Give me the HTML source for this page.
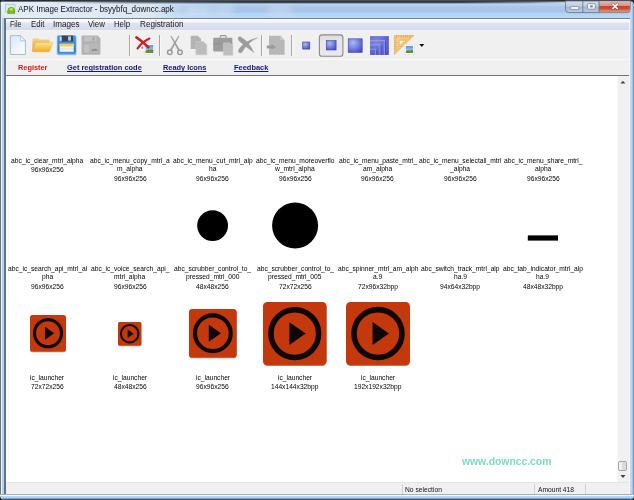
<!DOCTYPE html>
<html><head><meta charset="utf-8"><title>APK Image Extractor</title>
<style>
html,body{margin:0;padding:0;}
body{width:634px;height:500px;overflow:hidden;background:#fff;position:relative;font-family:"Liberation Sans", sans-serif;}
div,span,svg{position:absolute;box-sizing:border-box;}
.tl{left:0;top:0;width:634px;height:500px;will-change:transform;filter:blur(.35px);}
#gtxt{}
.tl span{white-space:pre;line-height:1;transform-origin:0 50%;display:block;}
#frame{left:0;top:0;width:634px;height:500px;background:#b3d2f0;border-radius:5px 6px 5px 5px;overflow:hidden;}
#bg{left:0;top:0;width:634px;height:500px;background:#23272c;}
#tb{left:0;top:0;width:634px;height:18px;background:linear-gradient(to bottom,#1f2124 0,#2f3338 .9px,#6b737c 1.5px,#bccbdb 2.2px,#c8dcf0 3px,#b4d0ed 5px,#a7c7ea 7px,#a5c5ea 11.5px,#b4d3f4 13.5px,#bcd9f7 18px);}
#tbd{left:50px;top:0;width:520px;height:5px;background:linear-gradient(to bottom,#66727f 0,#2c3239 1px,#2e353e 2px,#46525f 2.7px,rgba(120,145,172,.8) 3.4px,rgba(150,180,214,0) 4.4px);-webkit-mask-image:linear-gradient(to right,transparent 0,rgba(0,0,0,.6) 80px,#000 200px,#000 410px,rgba(0,0,0,.5) 480px,transparent 518px);mask-image:linear-gradient(to right,transparent 0,rgba(0,0,0,.6) 80px,#000 200px,#000 410px,rgba(0,0,0,.5) 480px,transparent 518px);}
#tbglow{left:1px;top:2.4px;width:200px;height:15.6px;background:linear-gradient(to right,rgba(232,238,245,.92) 0,rgba(226,234,243,.88) 150px,rgba(215,228,242,.5) 176px,rgba(200,220,242,0) 196px);}
.blot{top:5px;height:11px;border-radius:5px;background:rgba(220,232,246,.55);filter:blur(3px);}
#fl{left:0;top:2.5px;width:6px;height:497.5px;background:linear-gradient(to right,#6a7582 0,#6a7582 1px,#eef4fa 1px,#eef4fa 1.9px,#a9d0f5 2.1px,#b6d7f6 4px,#dfeaf5 4.4px,rgba(0,0,0,0) 4.4px);}
#fli{left:4.4px;top:18px;width:1.2px;height:477px;background:#66727e;}
#fr{left:629px;top:2.5px;width:5px;height:497.5px;background:linear-gradient(to right,rgba(0,0,0,0) 0,rgba(0,0,0,0) 1px,#c2ddf8 1px,#b0d4f6 3.3px,#8ab6e4 3.7px,#749fce 4.4px,#5b7ea4 5px);}
#fri{left:629px;top:18px;width:1px;height:477px;background:#f4f8fc;}
#fb{left:0;top:494px;width:634px;height:6px;background:linear-gradient(to bottom,#a9b0b8 0,#a9b0b8 .9px,#f2f7fc 1.1px,#f2f7fc 1.9px,#b8d8f8 2.1px,#aad0f5 3.9px,#7fa9d6 4.2px,#6f97c2 4.9px,#46566a 5.1px,#46566a 6px);}
#client{left:6px;top:18px;width:623px;height:477px;background:#f0f0f0;}
#ctop{left:5px;top:17.6px;width:625px;height:1.2px;background:#76828f;}
#menu{left:6px;top:19px;width:623px;height:12px;background:linear-gradient(to bottom,#fdfdfe 0,#f4f5fa 3px,#dfe3f0 4.5px,#d6dbeb 10.5px,#eef0f6 11px,#f6f6fa 12px);}
#tool{left:6px;top:31px;width:623px;height:29px;background:#f0f0f0;}
#tsep{left:6px;top:59px;width:623px;height:1px;background:#f8f8f8;}
#links{left:6px;top:60px;width:623px;height:15px;background:#f0f0f0;}
#cborder{left:5px;top:74.8px;width:624px;height:1.3px;background:#737373;}
#content{left:6px;top:76px;width:611px;height:405.5px;background:#fff;}
#sb{left:617px;top:76px;width:12px;height:405.5px;background:#f0f0f0;border-left:1px solid #f7f7f7;}
#thumb{left:618.2px;top:461.2px;width:9px;height:9.4px;border:1px solid #a4a4a4;border-radius:2px;background:linear-gradient(to right,#f7f7f7,#e9e9e9 45%,#d6d6d6 55%,#e0e0e0);}
#status{left:6px;top:481.5px;width:623px;height:13px;background:#f0f0f0;border-top:1px solid #e4e4e4;}
.sdiv{top:484px;width:1px;height:10px;background:#d2d2d2;}
.vsep{top:35px;width:1.4px;height:21px;background:#a6a6a6;box-shadow:1px 0 0 #f8f8f8;}
#flt{left:1px;top:2.4px;width:4.6px;height:15.4px;background:linear-gradient(to bottom,#e9eff6,#dfe8f2);}

</style></head><body>
<div id="bg"></div>
<div id="frame">
<div id="tb"></div><div id="tbglow"></div><div class="blot" style="left:186px;width:26px"></div><div class="blot" style="left:212px;width:22px;opacity:.8"></div><div class="blot" style="left:268px;width:24px;opacity:.7"></div><div id="tbd"></div>
<div id="fl"></div><div id="fr"></div>
<div id="flt"></div>
<div id="client"></div>
<div id="fli"></div><div id="fri"></div>
<div id="ctop"></div>
<div id="menu"></div>
<div id="tool"></div><div id="tsep"></div>
<div id="links"></div>
<div id="content"></div>
<div id="cborder"></div>
<div id="sb"></div><div id="thumb"></div>
<svg style="left:619px;top:79px" width="8" height="6" viewBox="0 0 8 6"><path d="M1.4 4.4 L3.9 1.7 L6.4 4.4 Z" fill="#444"/></svg>
<svg style="left:619px;top:474px" width="8" height="6" viewBox="0 0 8 6"><path d="M1.5 1 L6.5 1 L4 3.9 Z" fill="#444"/></svg>
<svg style="left:622px;top:488px" width="8" height="8" viewBox="0 0 8 8"><path d="M5.2 1h1v1h-1z M3.4 2.8h1v1h-1z M5.2 2.8h1v1h-1z M1.6 4.6h1v1h-1z M3.4 4.6h1v1h-1z M5.2 4.6h1v1h-1z" fill="#c4c8cc"/></svg>
<div id="status"></div>
<div class="sdiv" style="left:402px"></div><div class="sdiv" style="left:534px"></div><div class="sdiv" style="left:585px"></div>
<div id="fb"></div>
<svg style="left:0;top:0" width="634" height="20" viewBox="0 0 634 20">
<defs>
<linearGradient id="gcb" x1="0" y1="0" x2="0" y2="1"><stop offset="0" stop-color="#d4e0ee"/><stop offset=".45" stop-color="#bccde0"/><stop offset=".5" stop-color="#a3b8d0"/><stop offset="1" stop-color="#b6cbe2"/></linearGradient>
<linearGradient id="gcl" x1="0" y1="0" x2="0" y2="1"><stop offset="0" stop-color="#e4b4a8"/><stop offset=".38" stop-color="#dc9484"/><stop offset=".47" stop-color="#c8422e"/><stop offset=".68" stop-color="#cc4c38"/><stop offset=".82" stop-color="#d67a64"/><stop offset="1" stop-color="#dc927a"/></linearGradient>
</defs>
<path d="M565.6 1 H630.2 V9.6 Q630.2 12.6 627.2 12.6 H568.6 Q565.6 12.6 565.6 9.6 Z" fill="url(#gcb)" stroke="#6b7a8c" stroke-width=".9"/>
<path d="M599 1.4 H629.8 V9.4 Q629.8 12.2 627 12.2 H599 Z" fill="url(#gcl)"/>
<path d="M582.8 1 V12.6 M599 1 V12.6" stroke="#6b7a8c" stroke-width=".9"/>
<rect x="570.6" y="6.6" width="8.2" height="2.8" rx="1" fill="#fbfcfe" stroke="#6d7886" stroke-width=".7"/>
<rect x="587.6" y="3.6" width="7.6" height="5.6" rx="1" fill="#f4f7fb" stroke="#6d7886" stroke-width=".7"/>
<rect x="590" y="5.4" width="2.8" height="2" fill="#7c8796"/>
<path d="M613 4.3 L617.2 8.3 M617.2 4.3 L613 8.3" stroke="#5b2a24" stroke-width="2.6" stroke-linecap="square" opacity=".5"/>
<path d="M613 4.3 L617.2 8.3 M617.2 4.3 L613 8.3" stroke="#fff" stroke-width="1.6" stroke-linecap="square"/>
<!-- app icon -->
<rect x="5.3" y="4.3" width="9.6" height="7.6" fill="#dfeaf6" stroke="#a9bfdd" stroke-width=".8"/>
<rect x="10" y="5" width="4.4" height="3" fill="#d8f0c4"/>
<path d="M7.3 13 V11 Q7.6 7 11.2 7 Q14.8 7 15.1 11 V13 Q15.1 13.9 14.2 13.9 H12.7 V12.6 H9.7 V13.9 H8.2 Q7.3 13.9 7.3 13 Z" fill="#74b616"/><path d="M9.7 12.6 H12.7 V13.9 H9.7 Z" fill="#3f6a10" opacity=".55"/>
<path d="M9.2 10.4 Q9.2 7.8 11.2 7.8 Q13.2 7.8 13.2 10.4 Z" fill="#b4ea44"/>
</svg>

<div class="vsep" style="left:129px"></div>
<div class="vsep" style="left:159px"></div>
<div class="vsep" style="left:261px"></div>
<div class="vsep" style="left:290.5px"></div>
<svg style="left:6px;top:31px" width="440" height="29" viewBox="6 31 440 29">
<defs>
<linearGradient id="gdoc" x1="0" y1="0" x2="1" y2="1"><stop offset="0" stop-color="#dbe6fb"/><stop offset=".5" stop-color="#edf3fd"/><stop offset="1" stop-color="#ffffff"/></linearGradient>
<linearGradient id="gfold" x1="0" y1="0" x2="0" y2="1"><stop offset="0" stop-color="#fce49a"/><stop offset=".5" stop-color="#f9c95a"/><stop offset="1" stop-color="#f3a92a"/></linearGradient>
<linearGradient id="gfoldb" x1="0" y1="0" x2="0" y2="1"><stop offset="0" stop-color="#f5d68a"/><stop offset="1" stop-color="#dfa040"/></linearGradient>
<linearGradient id="gsave" x1="0" y1="0" x2="0" y2="1"><stop offset="0" stop-color="#4f97e6"/><stop offset=".8" stop-color="#3378d0"/><stop offset="1" stop-color="#5aa8ee"/></linearGradient>
<radialGradient id="gsq" cx=".35" cy=".3" r=".8"><stop offset="0" stop-color="#a9bbf7"/><stop offset=".55" stop-color="#727ee0"/><stop offset="1" stop-color="#4a4cbc"/></radialGradient>
<linearGradient id="gbtn" x1="0" y1="0" x2="0" y2="1"><stop offset="0" stop-color="#dcdcdc"/><stop offset=".3" stop-color="#e6e6e6"/><stop offset="1" stop-color="#e9e9e9"/></linearGradient>
<linearGradient id="gsky" x1="0" y1="0" x2="0" y2="1"><stop offset="0" stop-color="#5c90d6"/><stop offset="1" stop-color="#cfe3f8"/></linearGradient>
<linearGradient id="grul" x1="0" y1="0" x2="1" y2="1"><stop offset="0" stop-color="#f8d592"/><stop offset="1" stop-color="#efb055"/></linearGradient>
</defs>
<!-- new doc -->
<path d="M10.4 35.7 H20.3 L25.4 40.8 V54.5 H10.4 Z" fill="url(#gdoc)" stroke="#9dbedb" stroke-width="1"/>
<path d="M20.3 35.7 V40.8 H25.4 Z" fill="#f4f9ff" stroke="#9dbedb" stroke-width=".8"/>
<!-- folder -->
<path d="M32.4 51 V39 Q32.4 38.2 33.2 38.2 H38.6 L39.8 39.6 H48.8 Q49.6 39.6 49.6 40.4 V51 Z" fill="url(#gfoldb)"/>
<path d="M35.6 42.4 H52.2 Q52.9 42.4 52.6 43.2 L49.9 51 Q49.6 51.8 48.8 51.8 H32.9 Q32.1 51.8 32.4 51 Z" fill="url(#gfold)" stroke="#eda32a" stroke-width=".4"/>
<!-- save -->
<rect x="57.2" y="35.6" width="18.9" height="19.2" rx="1.2" fill="url(#gsave)" stroke="#7fb8f0" stroke-width=".6"/>
<rect x="61.6" y="35.6" width="11.4" height="5.9" fill="#3b4352"/>
<rect x="68" y="36.4" width="3" height="4.2" fill="#b4c2d8"/>
<rect x="59.8" y="36.8" width="1.8" height="4" fill="#cfe3fa"/>
<rect x="59.6" y="43.8" width="14.1" height="8" fill="#f1f1f1"/>
<rect x="59.6" y="43.8" width="14.1" height="2.6" fill="#efd24a"/>
<rect x="59.6" y="48.6" width="14.1" height=".6" fill="#d8d8d8"/>
<!-- gray save -->
<path d="M81.5 36.4 Q81.5 35.6 82.3 35.6 H97.6 L100.4 38.4 V54 Q100.4 54.8 99.6 54.8 H82.3 Q81.5 54.8 81.5 54 Z" fill="#b2b2b2"/>
<rect x="84.2" y="36.6" width="12.2" height="4.6" fill="#c3c3c3"/>
<rect x="92.2" y="37" width="2.4" height="3.6" fill="#aaaaaa"/>
<rect x="84.2" y="44.6" width="5.2" height="8" fill="#c2c2c2"/>
<rect x="90.6" y="44.2" width="8" height="8.6" fill="#b9b9b9"/>
<path d="M91.2 51 Q92.6 47.6 94.4 49.2 Q96.2 47.2 98 50.8 Z" fill="#8e8e8e"/>
<!-- red X + picture -->
<rect x="144.3" y="43.8" width="10.2" height="10.4" fill="#fcfdff" stroke="#d4dce8" stroke-width=".5"/>
<rect x="145.5" y="45" width="7.8" height="8" fill="url(#gsky)"/>
<path d="M145.5 51 Q147.5 48.6 149.5 50 Q151.6 48.4 153.3 50.2 V53 H145.5 Z" fill="#5f9232"/>
<circle cx="142.3" cy="47.7" r="1" fill="#5aa040"/>
<rect x="141.6" y="49.2" width="2.6" height="1" fill="#fafcff"/>
<path d="M136.4 37.4 Q142.4 41.2 148.4 47.4" stroke="#c9202c" stroke-width="2.6" stroke-linecap="round" fill="none"/>
<path d="M149.4 38.6 Q142.4 42 137.6 48.4" stroke="#c9202c" stroke-width="2.2" stroke-linecap="round" fill="none"/>
<!-- scissors -->
<g stroke="#9b9b9b" fill="none" stroke-linecap="round">
<path d="M170.3 35.9 L171.6 35.9 L179.9 49.8 L178.2 50.8 Z" fill="#a0a0a0" stroke="none"/>
<path d="M179.5 35.9 L178.2 35.9 L169.9 49.8 L171.6 50.8 Z" fill="#a0a0a0" stroke="none"/>
<circle cx="169.8" cy="52.2" r="2.3" stroke-width="1.5"/>
<circle cx="180" cy="52.2" r="2.3" stroke-width="1.5"/>
</g>
<!-- copy -->
<path d="M190.7 35.8 H197.8 L201.1 39.1 V49 H190.7 Z" fill="#b3b3b3"/>
<path d="M195.9 41.5 H203.4 L206.8 44.9 V54.7 H195.9 Z" fill="#bcbcbc" stroke="#c9c9c9" stroke-width=".6"/>
<!-- paste -->
<path d="M220.2 37.8 V36.6 Q220.2 35.7 221.1 35.7 H225.3 Q226.2 35.7 226.2 36.6 V37.8" fill="none" stroke="#9a9a9a" stroke-width="1.2"/>
<rect x="213.2" y="37.7" width="19.2" height="13.7" rx="1" fill="#9c9c9c"/>
<rect x="213.2" y="43.4" width="19.2" height=".7" fill="#8e8e8e"/>
<path d="M223.4 42.9 H230 L232.8 45.7 V55.2 H223.4 Z" fill="#bdbdbd" stroke="#cacaca" stroke-width=".6"/>
<!-- gray X -->
<path d="M238.2 38.6 Q237.8 36.4 240.2 36.8 Q249 41.6 253.8 52.4 Q245.6 46.4 239.2 41 Q238.4 40 238.2 38.6 Z" fill="#9c9c9c" stroke="#9c9c9c" stroke-width=".5" stroke-linejoin="round"/>
<path d="M257.4 37.8 Q247.6 42.2 242.2 51.8 Q240.8 53.6 239.2 52.6 Q237.8 51.4 238.8 49.4 Q244.6 40.6 257.4 37.8 Z" fill="#9c9c9c" stroke="#9c9c9c" stroke-width=".5" stroke-linejoin="round"/>
<!-- doc with arrow -->
<path d="M269 35.8 H280.2 L284.6 40.2 V54.7 H269 Z" fill="#b7b7b7"/>
<path d="M280.2 35.8 V40.2 H284.6 Z" fill="#c6c6c6"/>
<path d="M266.8 45.4 H271.6 V44.2 L276 46.9 L271.6 49.6 V48.4 H266.8 Z" fill="#9a9a9a"/>
<!-- small sq -->
<rect x="302.7" y="42" width="7.1" height="7.1" fill="url(#gsq)" stroke="#4444ae" stroke-width=".6"/>
<!-- selected button -->
<rect x="319.4" y="34.9" width="23.5" height="21.4" rx="2.6" fill="url(#gbtn)" stroke="#8b8b8b" stroke-width="1.1"/>
<rect x="326.3" y="40.6" width="9.8" height="9.4" fill="url(#gsq)" stroke="#4444ae" stroke-width=".6"/>
<!-- large sq -->
<rect x="348.2" y="38.8" width="14" height="13.6" fill="url(#gsq)" stroke="#4545b0" stroke-width=".6"/>
<!-- nested -->
<rect x="370.1" y="36.2" width="18.7" height="18.7" fill="#5b60c9"/>
<rect x="370.1" y="36.2" width="18.7" height="18.7" fill="url(#gsq)" opacity=".45"/>
<g fill="none">
<path d="M370.1 40.6 H384.4 V54.9" stroke="#8f9bea" stroke-width="1.1"/>
<path d="M370.1 44.9 H380.1 V54.9" stroke="#8f9bea" stroke-width="1.1"/>
<path d="M370.1 49.3 H375.8 V54.9" stroke="#8f9bea" stroke-width="1.1"/>
<path d="M385.4 41 V54.9 M381.1 45.4 V54.9 M376.8 49.8 V54.9" stroke="#4042ae" stroke-width=".8"/>
</g>
<!-- ruler -->
<path d="M394.4 35.5 H413.9 L394.4 54.6 Z" fill="url(#grul)" stroke="#e0a040" stroke-width=".5"/>
<path d="M399.2 40.2 H405.4 L399.2 46.4 Z" fill="#f3ede2" stroke="#d69a3c" stroke-width=".5"/>
<path d="M396.6 35.7 v2 M398.8 35.7 v1.4 M401 35.7 v2 M403.2 35.7 v1.4 M405.4 35.7 v2 M407.6 35.7 v1.4 M409.8 35.7 v1.6 M394.6 38 h2 M394.6 40.2 h1.4 M394.6 42.4 h2 M394.6 44.6 h1.4 M394.6 46.8 h2 M394.6 49 h1.4" stroke="#c98c36" stroke-width=".6"/>
<!-- picture -->
<rect x="404.3" y="44.4" width="10.3" height="10.2" fill="#fdfeff" stroke="#d0d8e4" stroke-width=".5"/>
<rect x="405.8" y="45.9" width="7.3" height="7.2" fill="url(#gsky)"/>
<path d="M405.8 51.4 Q407.6 49.4 409.6 50.6 Q411.6 49.2 413.1 50.8 V53.1 H405.8 Z" fill="#5c8e2e"/>
<!-- dropdown -->
<path d="M419.3 44 H424.3 L421.8 47 Z" fill="#111"/>
</svg>

<svg style="left:190px;top:195px" width="380" height="60" viewBox="190 195 380 60"><circle cx="212.6" cy="225.6" r="15.4" fill="#000"/><circle cx="295.1" cy="225.5" r="23" fill="#000"/><rect x="527.8" y="235.4" width="30.2" height="5.2" fill="#000"/></svg>
<svg style="left:27.60px;top:313.15px" width="40.00" height="41.50" viewBox="27.60 313.15 40.00 41.50"><rect x="29.60" y="315.95" width="36.00" height="36.50" rx="2.52" fill="#8a2a0c" opacity=".55"/><rect x="29.60" y="315.15" width="36.00" height="36.50" rx="2.52" fill="#c4380d"/><circle cx="47.60" cy="333.40" r="13.50" fill="none" stroke="#0d0706" stroke-width="3.13"/><path d="M44.54 326.92 L53.76 333.40 L44.54 339.88 Z" fill="#0d0706"/></svg>
<svg style="left:116.40px;top:320.00px" width="27.40" height="28.40" viewBox="116.40 320.00 27.40 28.40"><rect x="118.40" y="322.80" width="23.40" height="23.40" rx="1.64" fill="#8a2a0c" opacity=".55"/><rect x="118.40" y="322.00" width="23.40" height="23.40" rx="1.64" fill="#c4380d"/><circle cx="130.10" cy="333.70" r="8.77" fill="none" stroke="#0d0706" stroke-width="2.04"/><path d="M128.11 329.49 L134.10 333.70 L128.11 337.91 Z" fill="#0d0706"/></svg>
<svg style="left:187.15px;top:307.45px" width="51.70" height="53.50" viewBox="187.15 307.45 51.70 53.50"><rect x="189.15" y="310.25" width="47.70" height="48.50" rx="3.34" fill="#8a2a0c" opacity=".55"/><rect x="189.15" y="309.45" width="47.70" height="48.50" rx="3.34" fill="#c4380d"/><circle cx="213.00" cy="333.70" r="17.89" fill="none" stroke="#0d0706" stroke-width="4.15"/><path d="M208.95 325.11 L221.16 333.70 L208.95 342.29 Z" fill="#0d0706"/></svg>
<svg style="left:261.30px;top:299.90px" width="67.60" height="68.20" viewBox="261.30 299.90 67.60 68.20"><rect x="263.30" y="302.70" width="63.60" height="63.20" rx="4.45" fill="#8a2a0c" opacity=".55"/><rect x="263.30" y="301.90" width="63.60" height="63.20" rx="4.45" fill="#c4380d"/><circle cx="295.10" cy="333.50" r="23.85" fill="none" stroke="#0d0706" stroke-width="5.53"/><path d="M289.69 322.05 L305.98 333.50 L289.69 344.95 Z" fill="#0d0706"/></svg>
<svg style="left:343.80px;top:299.90px" width="68.00" height="68.20" viewBox="343.80 299.90 68.00 68.20"><rect x="345.80" y="302.70" width="64.00" height="63.20" rx="4.48" fill="#8a2a0c" opacity=".55"/><rect x="345.80" y="301.90" width="64.00" height="63.20" rx="4.48" fill="#c4380d"/><circle cx="377.80" cy="333.50" r="24.00" fill="none" stroke="#0d0706" stroke-width="5.57"/><path d="M372.36 321.98 L388.74 333.50 L372.36 345.02 Z" fill="#0d0706"/></svg>
</div>

<div id="txt" class="tl">
<span style="left:18.30px;top:5.38px;font-size:9px;font-weight:normal;color:#10141c;transform:scaleX(0.8873);">APK Image Extractor - bsyybfq_downcc.apk</span>
<span style="left:9.80px;top:19.89px;font-size:8.4px;font-weight:normal;color:#1a1a1a;transform:scaleX(0.8444);">File</span>
<span style="left:30.60px;top:19.89px;font-size:8.4px;font-weight:normal;color:#1a1a1a;transform:scaleX(0.9351);">Edit</span>
<span style="left:52.70px;top:19.89px;font-size:8.4px;font-weight:normal;color:#1a1a1a;transform:scaleX(0.9647);">Images</span>
<span style="left:88.30px;top:19.89px;font-size:8.4px;font-weight:normal;color:#1a1a1a;transform:scaleX(0.9381);">View</span>
<span style="left:114.20px;top:19.89px;font-size:8.4px;font-weight:normal;color:#1a1a1a;transform:scaleX(0.9284);">Help</span>
<span style="left:139.70px;top:19.89px;font-size:8.4px;font-weight:normal;color:#1a1a1a;transform:scaleX(0.9731);">Registration</span>
<span style="left:17.70px;top:64.27px;font-size:7.6px;font-weight:bold;color:#cc1f1f;transform:scaleX(0.9674);">Register</span>
<span style="left:67.00px;top:64.27px;font-size:7.6px;font-weight:bold;color:#17177a;transform:scaleX(0.9792);text-decoration:underline;">Get registration code</span>
<span style="left:162.60px;top:64.27px;font-size:7.6px;font-weight:bold;color:#17177a;transform:scaleX(0.9698);text-decoration:underline;">Ready Icons</span>
<span style="left:233.80px;top:64.27px;font-size:7.6px;font-weight:bold;color:#17177a;transform:scaleX(0.9815);text-decoration:underline;">Feedback</span>
<span style="left:405.20px;top:485.53px;font-size:8px;font-weight:normal;color:#111;transform:scaleX(0.8380);">No selection</span>
<span style="left:537.50px;top:485.53px;font-size:8px;font-weight:normal;color:#111;transform:scaleX(0.8345);">Amount 418</span>
<span style="left:462.10px;top:456.11px;font-size:10.5px;font-weight:bold;color:#7ddac3;transform:scaleX(0.9865);">www.downcc.com</span>
</div>
<div id="gtxt" class="tl">
<span style="left:11.28px;top:157.03px;font-size:8px;font-weight:normal;color:#000;transform:scaleX(0.8330);">abc_ic_clear_mtrl_alpha</span>
<span style="left:31.09px;top:166.03px;font-size:8px;font-weight:normal;color:#000;transform:scaleX(0.8330);">96x96x256</span>
<span style="left:90.16px;top:157.03px;font-size:8px;font-weight:normal;color:#000;transform:scaleX(0.8330);">abc_ic_menu_copy_mtrl_a</span>
<span style="left:117.20px;top:165.03px;font-size:8px;font-weight:normal;color:#000;transform:scaleX(0.8330);">m_alpha</span>
<span style="left:113.67px;top:174.63px;font-size:8px;font-weight:normal;color:#000;transform:scaleX(0.8330);">96x96x256</span>
<span style="left:172.74px;top:157.03px;font-size:8px;font-weight:normal;color:#000;transform:scaleX(0.8330);">abc_ic_menu_cut_mtrl_alp</span>
<span style="left:208.85px;top:165.03px;font-size:8px;font-weight:normal;color:#000;transform:scaleX(0.8330);">ha</span>
<span style="left:196.25px;top:174.63px;font-size:8px;font-weight:normal;color:#000;transform:scaleX(0.8330);">96x96x256</span>
<span style="left:255.87px;top:157.03px;font-size:8px;font-weight:normal;color:#000;transform:scaleX(0.8330);">abc_ic_menu_moreoverflo</span>
<span style="left:275.32px;top:165.03px;font-size:8px;font-weight:normal;color:#000;transform:scaleX(0.8330);">w_mtrl_alpha</span>
<span style="left:278.83px;top:174.63px;font-size:8px;font-weight:normal;color:#000;transform:scaleX(0.8330);">96x96x256</span>
<span style="left:338.63px;top:157.03px;font-size:8px;font-weight:normal;color:#000;transform:scaleX(0.8330);">abc_ic_menu_paste_mtrl_</span>
<span style="left:363.08px;top:165.03px;font-size:8px;font-weight:normal;color:#000;transform:scaleX(0.8330);">am_alpha</span>
<span style="left:361.41px;top:174.63px;font-size:8px;font-weight:normal;color:#000;transform:scaleX(0.8330);">96x96x256</span>
<span style="left:419.18px;top:157.03px;font-size:8px;font-weight:normal;color:#000;transform:scaleX(0.8330);">abc_ic_menu_selectall_mtrl</span>
<span style="left:450.29px;top:165.03px;font-size:8px;font-weight:normal;color:#000;transform:scaleX(0.8330);">_alpha</span>
<span style="left:443.99px;top:174.63px;font-size:8px;font-weight:normal;color:#000;transform:scaleX(0.8330);">96x96x256</span>
<span style="left:503.61px;top:157.03px;font-size:8px;font-weight:normal;color:#000;transform:scaleX(0.8330);">abc_ic_menu_share_mtrl_</span>
<span style="left:534.73px;top:165.03px;font-size:8px;font-weight:normal;color:#000;transform:scaleX(0.8330);">alpha</span>
<span style="left:526.57px;top:174.63px;font-size:8px;font-weight:normal;color:#000;transform:scaleX(0.8330);">96x96x256</span>
<span style="left:7.76px;top:265.03px;font-size:8px;font-weight:normal;color:#000;transform:scaleX(0.8330);">abc_ic_search_api_mtrl_al</span>
<span style="left:41.84px;top:273.03px;font-size:8px;font-weight:normal;color:#000;transform:scaleX(0.8330);">pha</span>
<span style="left:31.09px;top:282.63px;font-size:8px;font-weight:normal;color:#000;transform:scaleX(0.8330);">96x96x256</span>
<span style="left:90.71px;top:265.03px;font-size:8px;font-weight:normal;color:#000;transform:scaleX(0.8330);">abc_ic_voice_search_api_</span>
<span style="left:114.42px;top:273.03px;font-size:8px;font-weight:normal;color:#000;transform:scaleX(0.8330);">mtrl_alpha</span>
<span style="left:113.67px;top:282.63px;font-size:8px;font-weight:normal;color:#000;transform:scaleX(0.8330);">96x96x256</span>
<span style="left:174.03px;top:265.03px;font-size:8px;font-weight:normal;color:#000;transform:scaleX(0.8330);">abc_scrubber_control_to_</span>
<span style="left:185.88px;top:273.03px;font-size:8px;font-weight:normal;color:#000;transform:scaleX(0.8330);">pressed_mtrl_000</span>
<span style="left:196.25px;top:282.63px;font-size:8px;font-weight:normal;color:#000;transform:scaleX(0.8330);">48x48x256</span>
<span style="left:256.61px;top:265.03px;font-size:8px;font-weight:normal;color:#000;transform:scaleX(0.8330);">abc_scrubber_control_to_</span>
<span style="left:268.46px;top:273.03px;font-size:8px;font-weight:normal;color:#000;transform:scaleX(0.8330);">pressed_mtrl_005</span>
<span style="left:278.83px;top:282.63px;font-size:8px;font-weight:normal;color:#000;transform:scaleX(0.8330);">72x72x256</span>
<span style="left:337.53px;top:265.03px;font-size:8px;font-weight:normal;color:#000;transform:scaleX(0.8330);">abc_spinner_mtrl_am_alph</span>
<span style="left:373.09px;top:273.03px;font-size:8px;font-weight:normal;color:#000;transform:scaleX(0.8330);">a.9</span>
<span style="left:357.71px;top:282.63px;font-size:8px;font-weight:normal;color:#000;transform:scaleX(0.8330);">72x96x32bpp</span>
<span style="left:421.04px;top:265.03px;font-size:8px;font-weight:normal;color:#000;transform:scaleX(0.8330);">abc_switch_track_mtrl_alp</span>
<span style="left:453.81px;top:273.03px;font-size:8px;font-weight:normal;color:#000;transform:scaleX(0.8330);">ha.9</span>
<span style="left:440.29px;top:282.63px;font-size:8px;font-weight:normal;color:#000;transform:scaleX(0.8330);">94x64x32bpp</span>
<span style="left:502.87px;top:265.03px;font-size:8px;font-weight:normal;color:#000;transform:scaleX(0.8330);">abc_tab_indicator_mtrl_alp</span>
<span style="left:536.39px;top:273.03px;font-size:8px;font-weight:normal;color:#000;transform:scaleX(0.8330);">ha.9</span>
<span style="left:522.87px;top:282.63px;font-size:8px;font-weight:normal;color:#000;transform:scaleX(0.8330);">48x48x32bpp</span>
<span style="left:30.36px;top:374.03px;font-size:8px;font-weight:normal;color:#000;transform:scaleX(0.8330);">ic_launcher</span>
<span style="left:31.09px;top:383.03px;font-size:8px;font-weight:normal;color:#000;transform:scaleX(0.8330);">72x72x256</span>
<span style="left:112.94px;top:374.03px;font-size:8px;font-weight:normal;color:#000;transform:scaleX(0.8330);">ic_launcher</span>
<span style="left:113.67px;top:383.03px;font-size:8px;font-weight:normal;color:#000;transform:scaleX(0.8330);">48x48x256</span>
<span style="left:195.52px;top:374.03px;font-size:8px;font-weight:normal;color:#000;transform:scaleX(0.8330);">ic_launcher</span>
<span style="left:196.25px;top:383.03px;font-size:8px;font-weight:normal;color:#000;transform:scaleX(0.8330);">96x96x256</span>
<span style="left:278.10px;top:374.03px;font-size:8px;font-weight:normal;color:#000;transform:scaleX(0.8330);">ic_launcher</span>
<span style="left:271.42px;top:383.03px;font-size:8px;font-weight:normal;color:#000;transform:scaleX(0.8330);">144x144x32bpp</span>
<span style="left:360.68px;top:374.03px;font-size:8px;font-weight:normal;color:#000;transform:scaleX(0.8330);">ic_launcher</span>
<span style="left:354.00px;top:383.03px;font-size:8px;font-weight:normal;color:#000;transform:scaleX(0.8330);">192x192x32bpp</span>
</div>
</body></html>
